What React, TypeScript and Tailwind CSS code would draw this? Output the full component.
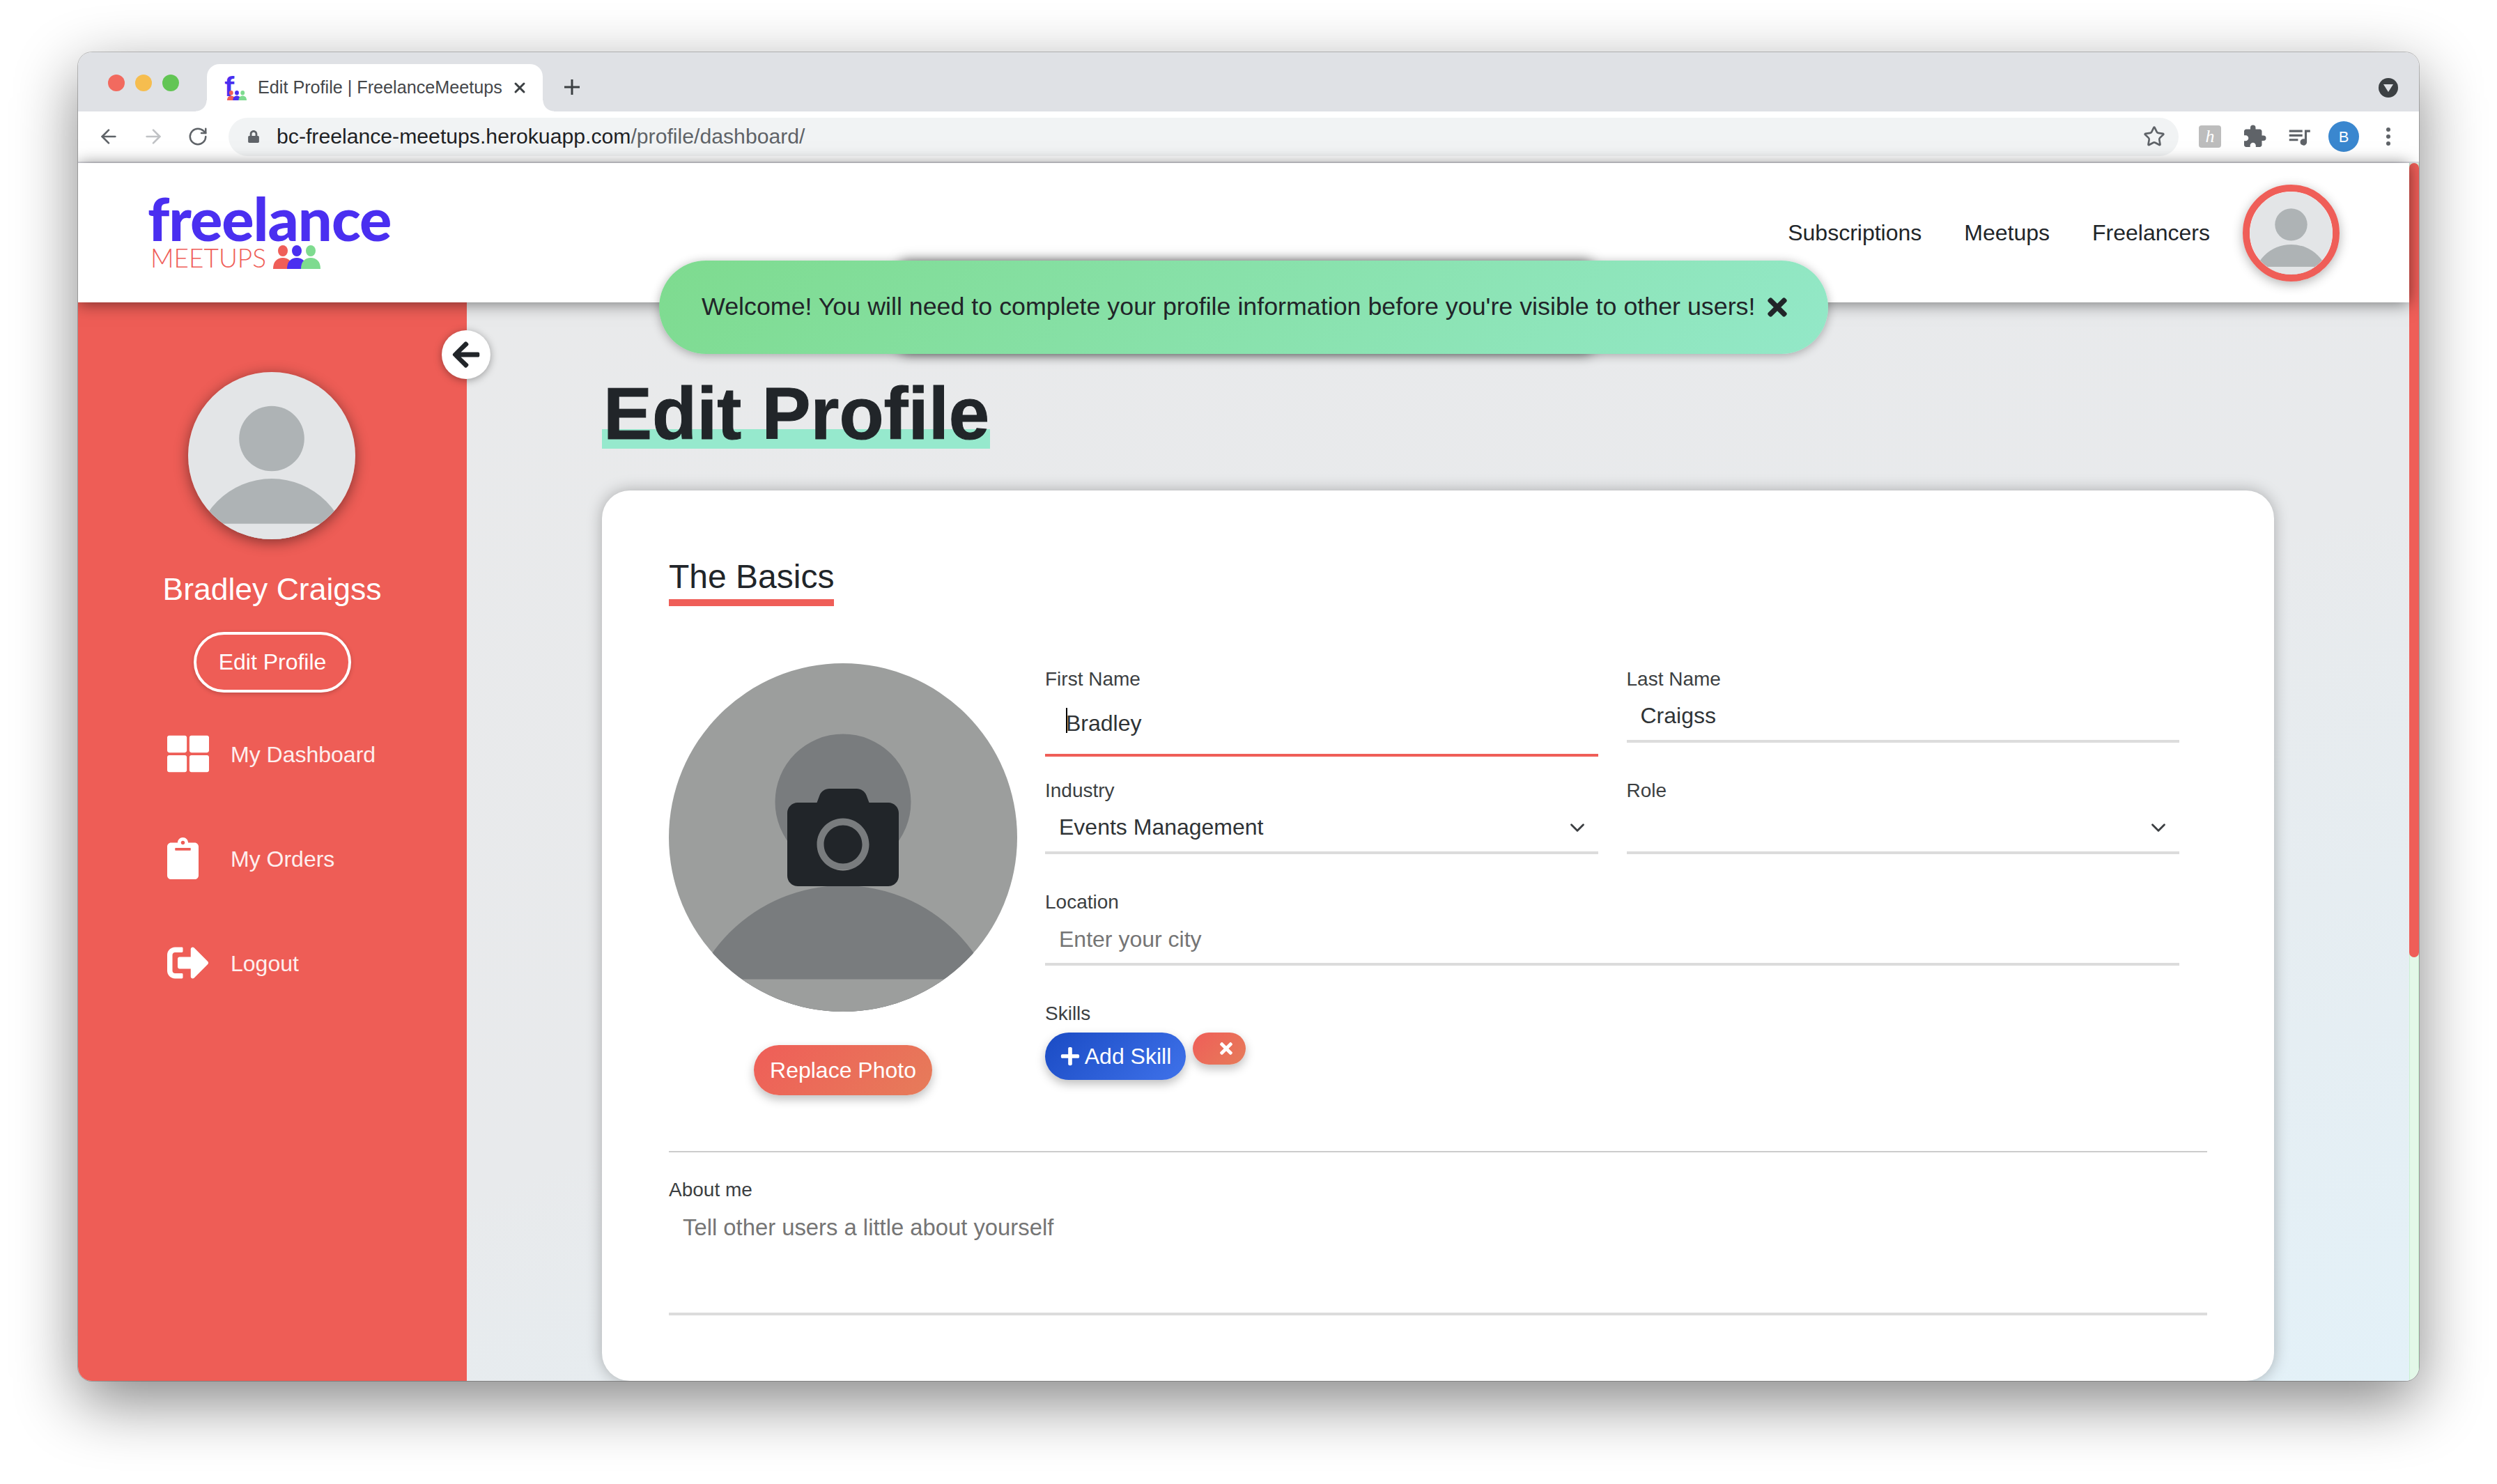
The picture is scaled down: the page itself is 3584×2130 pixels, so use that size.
import { ArrowLeft, ArrowRight, ChevronDown, RotateCw, Star, X } from 'lucide-react';
import { FaArrowLeft, FaCamera, FaClipboard, FaLock, FaPlus, FaSignOutAlt, FaThLarge, FaTimes } from 'react-icons/fa';
import { MdExtension, MdQueueMusic } from 'react-icons/md';

const Avatar = ({ bg, fg }: { bg: string; fg: string }) => (
  <svg viewBox="0 0 100 100" className="block w-full h-full rounded-full">
    <rect width="100" height="100" fill={bg} />
    <circle cx="50" cy="39.8" r="19.5" fill={fg} />
    <circle cx="50" cy="109.8" r="46" fill={fg} />
    <rect y="90.7" width="100" height="10" fill={bg} />
  </svg>
);

const People = ({ className }: { className: string }) => (
  <svg viewBox="0 0 68 34" className={className}>
    <ellipse cx="14" cy="8" rx="7" ry="8" fill="#ef5e58" />
    <path d="M0 34c0-11 6-16 14-16s14 5 14 16z" fill="#ef5e58" />
    <ellipse cx="54" cy="8" rx="7" ry="8" fill="#7edb8f" />
    <ellipse cx="34" cy="8" rx="7" ry="8" fill="#4a2ff0" />
    <path d="M20 34c0-11 6-16 14-16s14 5 14 16z" fill="#4a2ff0" />
    <path d="M40 34c0-11 6-16 14-16s14 5 14 16z" fill="#7edb8f" />
  </svg>
);

const Field = ({ label, value, placeholder, select }: { label: string; value?: string; placeholder?: string; select?: boolean }) => (
  <div className="h-[160px]">
    <div className="h-[40px] leading-[42px] text-[28px] text-[#3c3f42]">{label}</div>
    <div className="h-[72px] border-b-4 border-[#dcdcdc] pl-[20px] pr-[20px] flex items-center justify-between text-[32px]">
      {placeholder ? <span className="text-[#757575]">{placeholder}</span> : <span className="text-[#2f3336] -mt-[2px]">{value}</span>}
      {select && <ChevronDown size={34} strokeWidth={2} className="text-[#3c3f42] mr-[-7px]" />}
    </div>
  </div>
);

const Tab = () => (
  <div className="relative ml-[40px] mt-[17px] w-[482px] h-[68px] bg-white rounded-t-[18px] flex items-center pl-[25px]">
    <span className="absolute left-[-16px] bottom-0 w-[16px] h-[16px] bg-[radial-gradient(circle_at_0_0,#dfe1e5_15px,white_16px)]" />
    <span className="absolute right-[-16px] bottom-0 w-[16px] h-[16px] bg-[radial-gradient(circle_at_100%_0,#dfe1e5_15px,white_16px)]" />
    <div className="relative w-[32px] h-[34px] mr-[16px] mt-[2px]">
      <span className="absolute left-0 top-[-9px] font-['Lato'] font-black text-[40px] leading-[44px] text-[#4a2ff0]">f</span>
      <People className="absolute left-[4px] bottom-0 w-[28px] h-[14px]" />
    </div>
    <span className="text-[25.2px] text-[#45474a] whitespace-nowrap">Edit Profile | FreelanceMeetups</span>
    <X size={24} strokeWidth={3} className="ml-[13px] text-[#3c4043]" />
  </div>
);

export default function App() {
  return (
    <div className="w-full h-[2130px] bg-white pt-[75px] pl-[112px] font-['Liberation_Sans',sans-serif] overflow-hidden">
      <div className="relative w-[3360px] h-[1907px] rounded-[20px] overflow-hidden flex flex-col bg-white shadow-[0_0_0_1px_rgba(0,0,0,0.22),0_30px_90px_0_rgba(0,0,0,0.48)]">
        {/* browser tabs */}
        <div className="h-[85px] bg-[#dfe1e5] flex items-start pl-[43px] shrink-0">
          <div className="flex gap-[15px] mt-[32px]">
            <span className="w-[24px] h-[24px] rounded-full bg-[#f26a5f]" />
            <span className="w-[24px] h-[24px] rounded-full bg-[#f6bd4f]" />
            <span className="w-[24px] h-[24px] rounded-full bg-[#62c554]" />
          </div>
          <Tab />
          <div className="ml-[22px] mt-[30px] w-[40px] h-[40px] flex items-center justify-center text-[#3c4043]">
            <svg viewBox="0 0 24 24" className="w-[24px] h-[24px]"><path d="M12 1v22M1 12h22" stroke="currentColor" strokeWidth="3" /></svg>
          </div>
          <div className="ml-auto mr-[30px] mt-[37px] w-[28px] h-[28px] rounded-full bg-[#3c4043] flex items-center justify-center">
            <svg viewBox="0 0 14 14" className="w-[14px] h-[14px]"><path d="M0 2h14L7 13z" fill="#dfe1e5" /></svg>
          </div>
        </div>
        {/* browser toolbar */}
        <div className="h-[74px] bg-white border-b-2 border-[#dcdce2] flex items-center pl-[12px] pr-[12px] shrink-0">
          <div className="w-[64px] flex justify-center text-[#5f6368]"><ArrowLeft size={32} strokeWidth={2} /></div>
          <div className="w-[64px] flex justify-center text-[#c0c2c5]"><ArrowRight size={32} strokeWidth={2} /></div>
          <div className="w-[64px] flex justify-center text-[#5f6368]"><RotateCw size={30} strokeWidth={2} /></div>
          <div className="ml-[12px] mr-[13px] flex-1 h-[55px] rounded-full bg-[#f1f3f4] flex items-center pl-[28px] pr-[19px]">
            <FaLock className="w-[16px] h-[18px] text-[#5f6368]" />
            <span className="ml-[25px] text-[30.2px] text-[#202124] whitespace-nowrap">bc-freelance-meetups.herokuapp.com<span className="text-[#5f6368]">/profile/dashboard/</span></span>
            <Star size={32} strokeWidth={2} className="ml-auto text-[#5f6368]" />
          </div>
          <div className="w-[64px] flex justify-center">
            <div className="w-[32px] h-[32px] rounded-[4px] bg-[#bdbdbd] flex items-center justify-center font-['Liberation_Serif'] italic text-white text-[26px] leading-none">h</div>
          </div>
          <div className="w-[64px] flex justify-center text-[#5f6368]"><MdExtension size={36} /></div>
          <div className="w-[64px] flex justify-center text-[#5f6368]"><MdQueueMusic size={38} /></div>
          <div className="w-[64px] flex justify-center">
            <div className="w-[44px] h-[44px] rounded-full bg-[#3a87cf] flex items-center justify-center text-white text-[22px]">B</div>
          </div>
          <div className="w-[64px] flex flex-col items-center gap-[4px]">
            <span className="w-[6px] h-[6px] rounded-full bg-[#5f6368]" />
            <span className="w-[6px] h-[6px] rounded-full bg-[#5f6368]" />
            <span className="w-[6px] h-[6px] rounded-full bg-[#5f6368]" />
          </div>
        </div>
        {/* page */}
        <div className="relative flex-1 flex min-h-0">
          <div className="flex-1 flex flex-col min-w-0">
            <header className="relative z-10 h-[200px] bg-white shrink-0 flex items-center justify-between pl-[100px] pr-[100px] shadow-[0_2px_22px_rgba(0,0,0,0.5)]">
              <div className="w-[360px] -mt-[2px]">
                <div className="font-['Lato'] font-black text-[86.5px] leading-[70px] tracking-[-1px] text-[#4a2ff0] whitespace-nowrap">freelance</div>
                <div className="flex items-center mt-[4px] pl-[4px]">
                  <span className="font-['Lato'] font-light text-[37px] leading-[36px] text-[#ef5e58]">MEETUPS</span>
                  <People className="ml-[10px] w-[68px] h-[34px] -mt-[2px]" />
                </div>
              </div>
              <nav className="flex items-center gap-[61px] text-[32px] text-[#212529]">
                <span className="-ml-[2px] -mt-[1px]">Subscriptions</span>
                <span className="-mt-[1px]">Meetups</span>
                <span className="-mt-[1px]">Freelancers</span>
                <div className="ml-[-14px] w-[139px] h-[139px] rounded-full border-[10px] border-[#ef5e58] shadow-[0_4px_16px_rgba(0,0,0,0.3)] overflow-hidden">
                  <Avatar bg="#e3e5e7" fg="#aeb3b5" />
                </div>
              </nav>
            </header>
            <div className="flex-1 flex min-h-0">
              <aside className="relative w-[558px] shrink-0 bg-[#ee5d56] pt-[100px] text-white">
                <div className="flex flex-col items-center pr-[2px]">
                  <div className="w-[240px] h-[240px] rounded-full shadow-[0_4px_20px_rgba(0,0,0,0.45)]">
                    <Avatar bg="#e3e5e7" fg="#aeb3b5" />
                  </div>
                  <div className="mt-[44px] ml-[1px] text-[44.5px] leading-[56px] whitespace-nowrap">Bradley Craigss</div>
                  <div className="mt-[33px] ml-[2px] w-[226px] h-[87px] rounded-full border-4 border-white flex items-center justify-center pb-[2px] text-[32px] leading-none shadow-[0_2px_6px_rgba(0,0,0,0.2)]">Edit Profile</div>
                </div>
                <div className="mt-[49px] pl-[128px] flex flex-col gap-[70px] text-[32px] text-white/90">
                  <div className="h-[80px] flex items-center">
                    <span className="w-[91px] shrink-0"><FaThLarge className="-mt-[2px] w-[60px] h-[60px] text-white" /></span>My Dashboard
                  </div>
                  <div className="h-[80px] flex items-center">
                    <span className="w-[91px] shrink-0"><FaClipboard className="-mt-[2px] w-[45px] h-[60px] text-white" /></span>My Orders
                  </div>
                  <div className="h-[80px] flex items-center">
                    <span className="w-[91px] shrink-0"><FaSignOutAlt className="-mt-[2px] w-[60px] h-[60px] text-white" /></span>Logout
                  </div>
                </div>
                <div className="absolute right-[-34px] top-[40px] w-[70px] h-[70px] rounded-full bg-white flex items-center justify-center shadow-[0_2px_12px_rgba(0,0,0,0.35)]">
                  <FaArrowLeft className="w-[44px] h-[44px] text-[#212529]" />
                </div>
              </aside>
              <main className="flex-1 min-w-0 overflow-hidden px-[194px] pt-[110px] bg-[linear-gradient(160deg,#e9eaeb_0%,#e8eaec_50%,#e3f1f8_100%)]">
                <h1 className="inline-block align-top pl-[2px] pr-[1px] text-[105px] leading-[100px] font-bold text-[#212529] whitespace-nowrap [-webkit-text-stroke:1px_#212529] bg-[linear-gradient(to_bottom,transparent_72px,#96e9cd_72px)]">Edit Profile</h1>
                <section className="mt-[60px] h-[1278px] bg-white rounded-[40px] px-[96px] pt-[95px] shadow-[0_0_22px_rgba(0,0,0,0.28)]">
                  <h2 className="inline-block align-top text-[48px] leading-[58px] pb-[3px] border-b-[10px] border-[#ef5e58] text-[#212529]">The Basics</h2>
                  <div className="mt-[82px] flex">
                    <div className="w-[500px] shrink-0 flex flex-col items-center">
                      <div className="relative w-[500px] h-[500px]">
                        <Avatar bg="#9c9e9d" fg="#797c7e" />
                        <FaCamera className="absolute left-[170px] top-[170px] w-[160px] h-[160px] text-[#212529]" />
                      </div>
                      <div className="mt-[48px] w-[256px] h-[72px] rounded-full flex items-center justify-center text-[32px] text-white bg-[linear-gradient(135deg,#ef5e58,#e67c5a)] shadow-[0_6px_14px_rgba(0,0,0,0.25)]">Replace Photo</div>
                    </div>
                    <div className="ml-[40px] mr-[40px] flex-1 pt-[2px] grid grid-cols-2 gap-x-[41px]">
                      <div className="h-[160px]">
                        <div className="h-[40px] leading-[42px] text-[28px] text-[#3c3f42]">First Name</div>
                        <div className="h-[92px] border-b-4 border-[#ef5e58] pl-[30px] flex items-center text-[32px] text-[#2f3336]">
                          <span className="relative">
                            <span className="absolute left-0 top-[2px] w-[2px] h-[36px] bg-black" />
                            Bradley
                          </span>
                        </div>
                      </div>
                      <Field label="Last Name" value="Craigss" />
                      <Field label="Industry" value="Events Management" select />
                      <Field label="Role" value="" select />
                      <div className="col-span-2">
                        <Field label="Location" placeholder="Enter your city" />
                      </div>
                      <div className="col-span-2 h-[160px]">
                        <div className="h-[40px] leading-[42px] text-[28px] text-[#3c3f42]">Skills</div>
                        <div className="mt-[8px] flex items-start gap-[10px]">
                          <div className="w-[202px] h-[68px] rounded-full flex items-center justify-center gap-[6px] text-[32px] text-white bg-[linear-gradient(135deg,#1a4bc4,#3f72ea)] shadow-[0_6px_14px_rgba(0,0,0,0.25)]">
                            <FaPlus className="w-[30px] h-[30px]" />Add Skill
                          </div>
                          <div className="w-[76px] h-[46px] rounded-full flex items-center justify-end pr-[15px] text-white bg-[linear-gradient(135deg,#ef5e58,#e67c5a)] shadow-[0_6px_14px_rgba(0,0,0,0.25)]">
                            <FaTimes className="w-[26px] h-[26px]" />
                          </div>
                        </div>
                      </div>
                    </div>
                  </div>
                  <div className="mt-[58px] border-t-2 border-[#cccccc]" />
                  <div className="mt-[33px] h-[40px] leading-[42px] text-[28px] text-[#3c3f42]">About me</div>
                  <div className="h-[161px] border-b-4 border-[#dcdcdc] pl-[20px] text-[32.8px] leading-[70px] text-[#757575]">Tell other users a little about yourself</div>
                </section>
              </main>
            </div>
          </div>
          {/* scrollbar */}
          <div className="w-[14px] shrink-0 bg-[#e3f8e8] border-x border-[#c9f1d2]">
            <div className="-mx-px h-[1140px] rounded-full bg-[#ef5e58]" />
          </div>
          {/* shadow of the toast stacked underneath */}
          <div className="absolute left-[1179px] top-[140px] z-20 w-[995px] h-[134px] rounded-[10px] shadow-[0_0_18px_rgba(0,0,0,0.55)]" />
          {/* toast */}
          <div className="absolute left-[834px] top-[140px] z-20 w-[1678px] h-[134px] rounded-full flex items-center pl-[61px] text-[35.8px] text-[#212529] bg-[linear-gradient(135deg,#7edb8f,#93e8c8)] shadow-[0_2px_14px_rgba(0,0,0,0.3)]">
            <span className="whitespace-nowrap">Welcome! You will need to complete your profile information before you're visible to other users!</span>
            <FaTimes className="absolute left-[1585px] top-[47px] w-[40px] h-[40px]" />
          </div>
        </div>
      </div>
    </div>
  );
}
